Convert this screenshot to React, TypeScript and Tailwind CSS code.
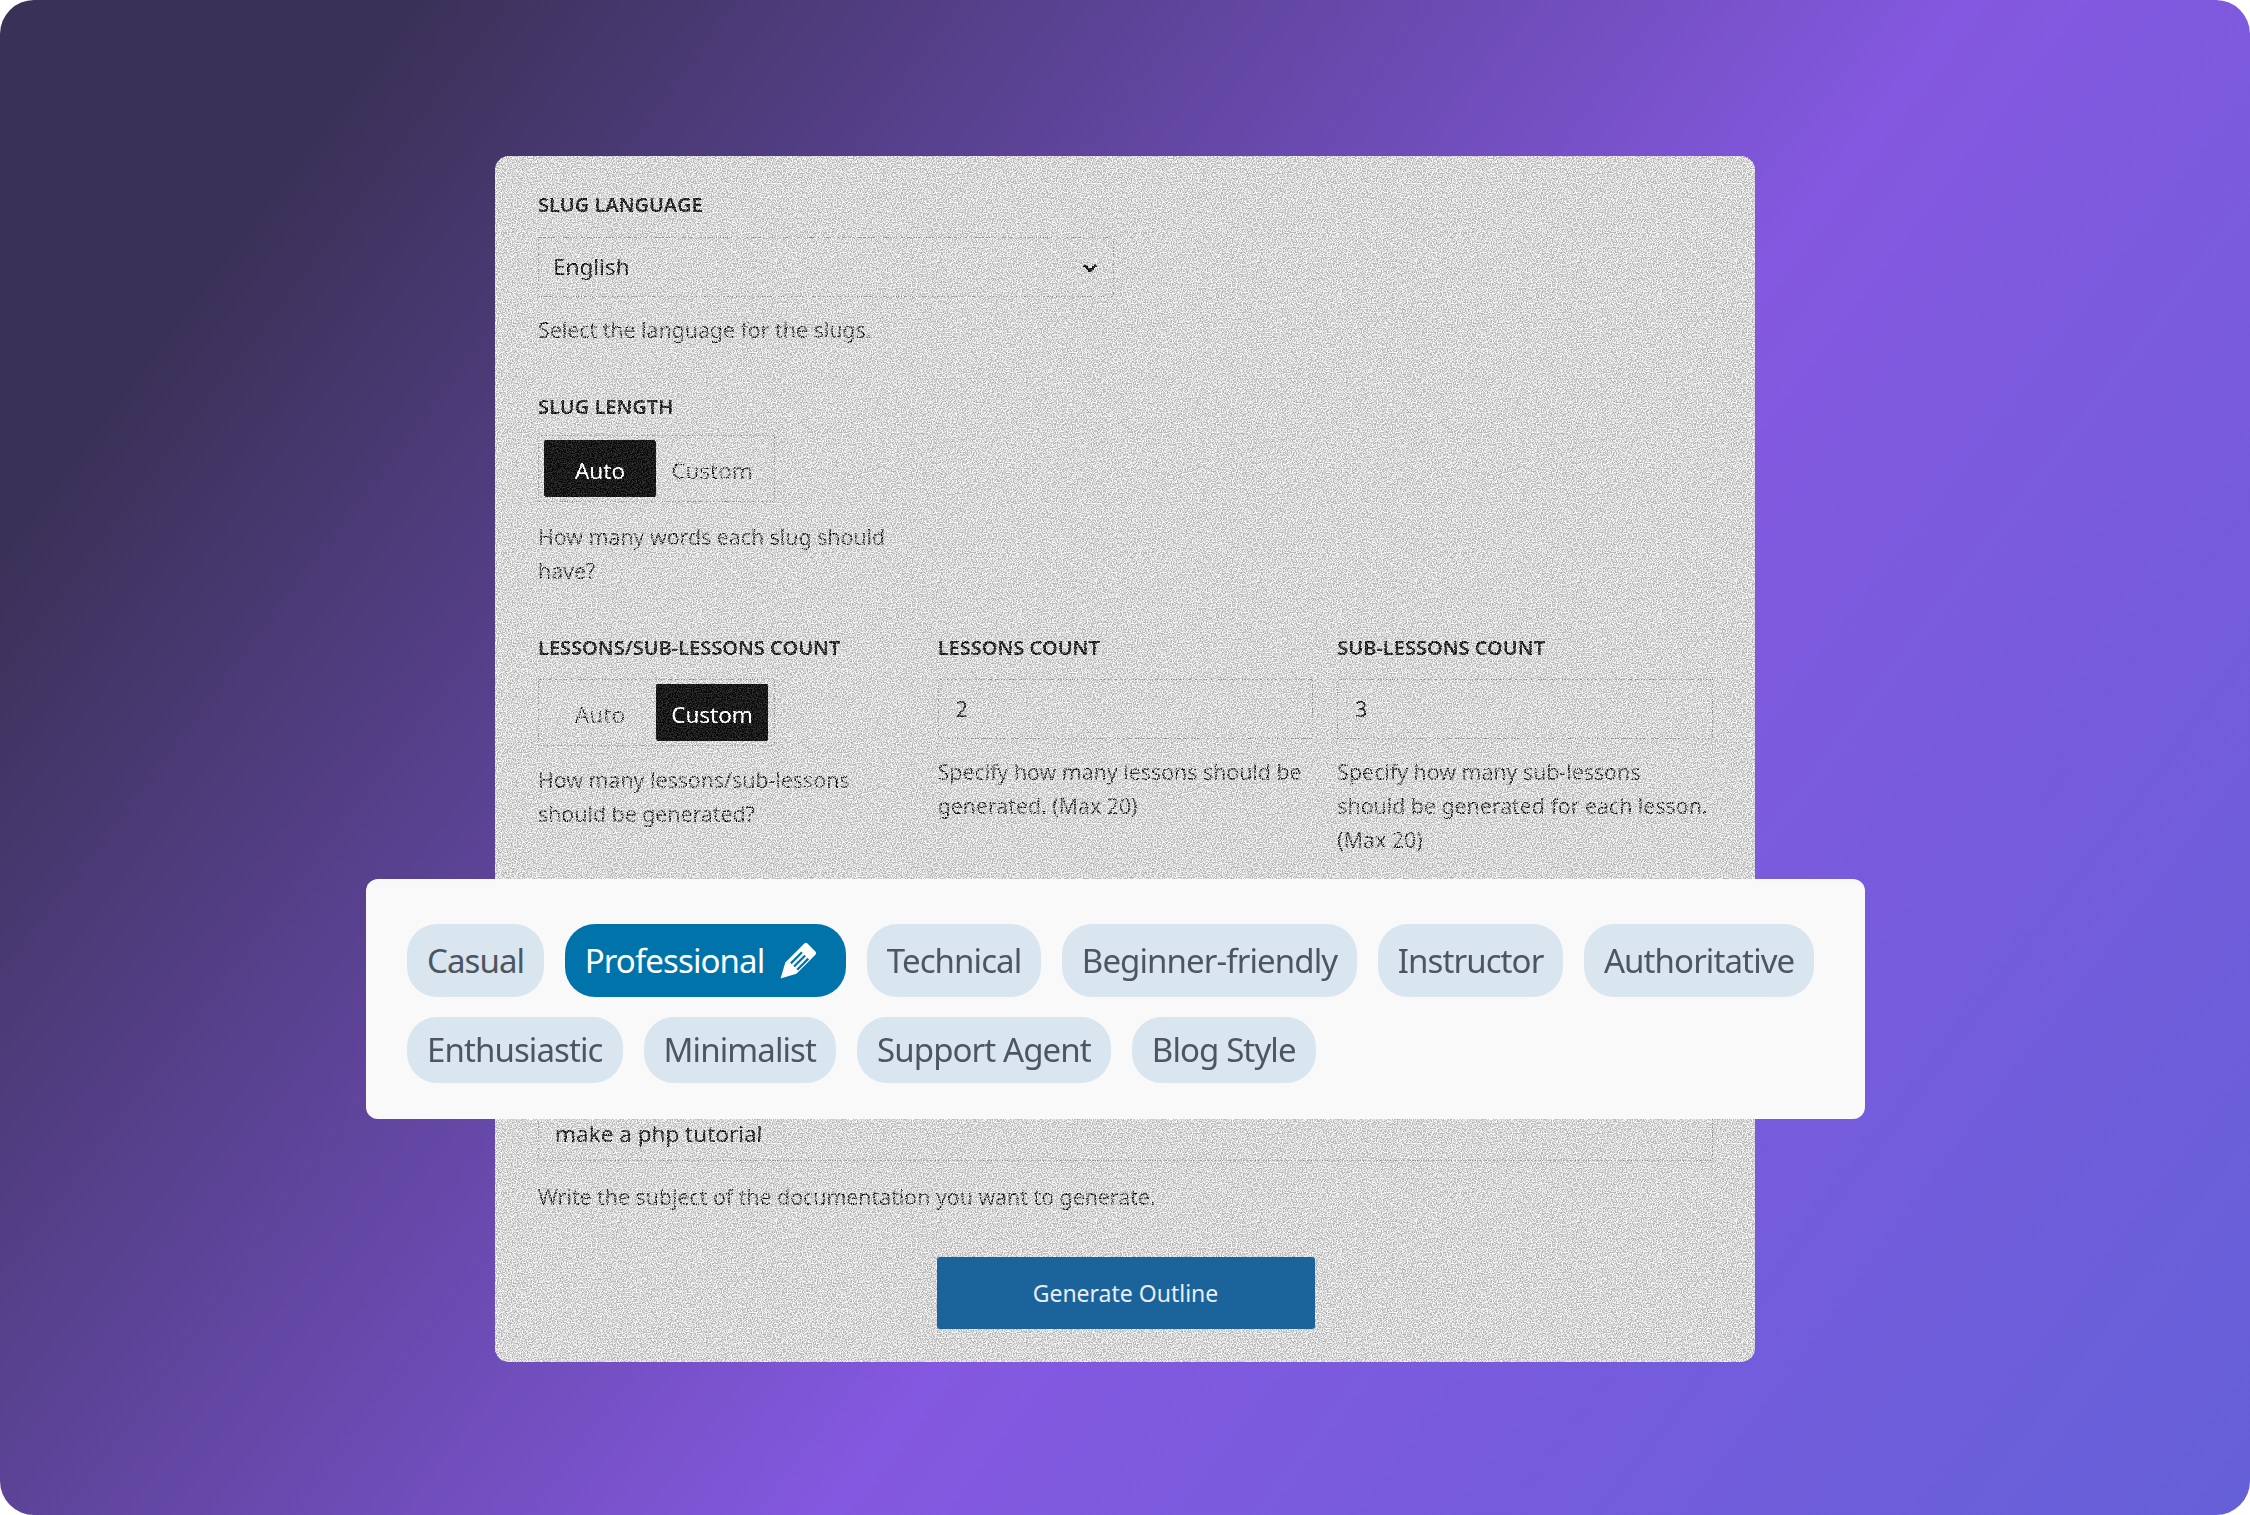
const font = "font-['Noto_Sans',sans-serif]";

const firstRow = ['Casual', 'Professional', 'Technical', 'Beginner-friendly', 'Instructor', 'Authoritative'];
const secondRow = ['Enthusiastic', 'Minimalist', 'Support Agent', 'Blog Style'];

function Label({ children }: { children: string }) {
  return <div className="h-[28px] text-[20px] leading-[28px] font-semibold text-[#303030]">{children}</div>;
}

function Help({ children, className = '' }: { children: React.ReactNode; className?: string }) {
  return <p className={`text-[21.3px] leading-[34px] text-[#666666] ${className}`}>{children}</p>;
}

function Toggle({ active, className = '' }: { active: 'Auto' | 'Custom'; className?: string }) {
  return (
    <div className={`flex h-[67px] w-[237px] items-center gap-0 border border-[#c0c0c0] px-[5px] ${className}`}>
      {(['Auto', 'Custom'] as const).map((opt) => (
        <button
          key={opt}
          className={`flex h-[57px] w-[112px] items-center justify-center rounded-[2px] pt-[4px] text-[22.5px] ${
            active === opt ? 'bg-[#1a1a1a] text-white' : 'text-[#777777]'
          }`}
        >
          {opt}
        </button>
      ))}
    </div>
  );
}

function NumberField({ value }: { value: string }) {
  return (
    <input
      readOnly
      value={value}
      className="mt-[17px] block h-[60px] w-full border border-[#c0c0c0] bg-transparent px-[17px] text-[21px] text-[#444444] outline-none"
    />
  );
}

function Chip({ name }: { name: string }) {
  const active = name === 'Professional';
  return (
    <button
      className={`flex items-center gap-[15px] rounded-[30px] pl-[20px] text-[33px] tracking-[-0.9px] whitespace-nowrap ${
        active ? 'h-[73px] bg-[#0073aa] pr-[29px] text-white' : 'bg-[#d9e6ef] pr-[20px] text-[#4d5560]'
      }`}
    >
      {name}
      {active && (
        <svg width="38" height="38" viewBox="0 0 24 24">
          <path d="M1 23 L4 13 L16 1 Q17 0 18 1 L23 6 Q24 7 23 8 L11 20 Z" fill="#ffffff" />
          <path d="M7.5 13.5 L14.5 6.5 M9.5 15.5 L16.5 8.5 M11.5 17.5 L18.5 10.5" stroke="#0073aa" strokeWidth="1.4" />
        </svg>
      )}
    </button>
  );
}

export default function App() {
  return (
    <div className={`${font} bg-white`}>
      <div className="relative h-[1515px] w-[2250px] overflow-hidden rounded-[34px] bg-[linear-gradient(127deg,#3a3157_12%,#8458e0_58%,#6560d8_100%)] pt-[156px]">
        {/* form panel */}
        <div className="relative mx-auto w-[1260px] overflow-hidden rounded-[14px] bg-[#d8d8d8] pt-[35px] pr-[42px] pb-[33px] pl-[43px]">
          <Label>SLUG LANGUAGE</Label>
          <div className="relative mt-[18px] w-[576px]">
            <select className="block h-[60px] w-full appearance-none border border-[#c0c0c0] bg-transparent px-[14px] text-[22.5px] text-[#333333] outline-none">
              <option>English</option>
            </select>
            <svg className="absolute top-[25px] right-[16px]" width="16" height="12" viewBox="0 0 16 12">
              <path d="M2 3 L8 9 L14 3" fill="none" stroke="#222222" strokeWidth="2.8" />
            </svg>
          </div>
          <Help className="mt-[16px]">Select the language for the slugs.</Help>

          <div className="mt-[46px]">
            <Label>SLUG LENGTH</Label>
            <Toggle active="Auto" className="mt-[14px]" />
            <Help className="mt-[18px] w-[375px]">How many words each slug should have?</Help>
          </div>

          <div className="mt-[46px] grid grid-cols-3 gap-x-[24px]">
            <div>
              <Label>LESSONS/SUB-LESSONS COUNT</Label>
              <Toggle active="Custom" className="mt-[17px]" />
              <Help className="mt-[17px]">How many lessons/sub-lessons should be generated?</Help>
            </div>
            <div>
              <Label>LESSONS COUNT</Label>
              <NumberField value="2" />
              <Help className="mt-[16px]">Specify how many lessons should be generated. (Max 20)</Help>
            </div>
            <div>
              <Label>SUB-LESSONS COUNT</Label>
              <NumberField value="3" />
              <Help className="mt-[16px]">Specify how many sub-lessons should be generated for each lesson. (Max 20)</Help>
            </div>
          </div>

          <textarea
            readOnly
            value="make a php tutorial"
            className="mt-[244px] block h-[60px] w-full resize-none overflow-hidden border border-[#c0c0c0] bg-transparent px-[16px] pt-[17px] text-[22.5px] leading-[30px] text-[#333333] outline-none"
          />
          <Help className="mt-[19px]">Write the subject of the documentation you want to generate.</Help>

          <div className="relative z-10 mt-[43px] flex justify-center">
            <button className="h-[72px] w-[378px] rounded-[3px] bg-[#1b639b] text-[23px] text-[#e8eef3]">Generate Outline</button>
          </div>

          {/* grain over the whole panel */}
          <svg className="pointer-events-none absolute inset-0 h-full w-full mix-blend-overlay" aria-hidden="true">
            <filter id="grain" colorInterpolationFilters="sRGB">
              <feTurbulence type="fractalNoise" baseFrequency="0.8" numOctaves="2" />
              <feColorMatrix values="3 0 0 0 -1  3 0 0 0 -1  3 0 0 0 -1  0 0 0 0 1" />
            </filter>
            <rect width="100%" height="100%" filter="url(#grain)" />
          </svg>
        </div>

        {/* tone chips card */}
        <div className="absolute top-[879px] left-[366px] flex h-[240px] w-[1499px] flex-col gap-[20px] rounded-[12px] bg-[#f9f9f9] pt-[45px] pl-[41px]">
          <div className="flex items-stretch gap-[20.5px]">
            {firstRow.map((name) => (
              <Chip key={name} name={name} />
            ))}
          </div>
          <div className="flex h-[66px] items-stretch gap-[21px]">
            {secondRow.map((name) => (
              <Chip key={name} name={name} />
            ))}
          </div>
        </div>
      </div>
    </div>
  );
}
